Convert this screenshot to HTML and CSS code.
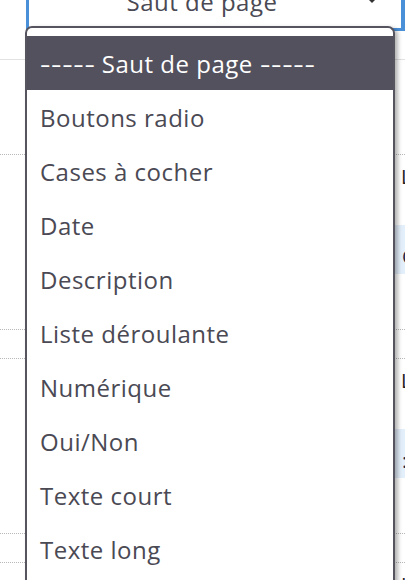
FILE: index.html
```html
<!DOCTYPE html>
<html lang="fr">
<head>
    <meta charset="UTF-8">
    <meta name="viewport" content="width=device-width, initial-scale=1.0">
    <title>Type de champ</title>
    <link rel="stylesheet" href="styles.css">
</head>
<body>
    <div class="page">
        <div class="field-type">
            <div class="select">
                <span class="select-value">Saut de page</span>
                <span class="caret"></span>
            </div>
        </div>

        <div class="field">
            <div class="field-label">Libellé</div>
            <div class="field-input">Question</div>
            <div class="field-sep"></div>
        </div>
        <div class="field">
            <div class="field-label">Libellé</div>
            <div class="field-input">: :</div>
            <div class="field-sep"></div>
        </div>
        <div class="field">
            <div class="field-label">Libellé</div>
        </div>
    </div>

    <ul class="dropdown">
        <li class="selected"><span class="dashes">-----</span> Saut de page <span class="dashes">-----</span></li>
        <li>Boutons radio</li>
        <li>Cases à cocher</li>
        <li>Date</li>
        <li>Description</li>
        <li>Liste déroulante</li>
        <li>Numérique</li>
        <li>Oui/Non</li>
        <li>Texte court</li>
        <li>Texte long</li>
    </ul>
</body>
</html>
```

FILE: styles.css
```css
html, body {
    overflow: hidden;
}

body {
    margin: 0;
    font-family: "Open Sans", "Noto Sans", sans-serif;
    color: #4a4954;
    background-color: #fff;
}

.page {
    width: 405px;
}

/* selected field type, scrolled mostly out of view */
.field-type {
    display: flow-root;
    height: 60px;
    border-bottom: 1px solid #e2e2e2;
    box-sizing: border-box;
    padding-left: 26px;
}

.select {
    position: relative;
    margin-top: -24px;
    height: 55px;
    border: 3px solid #4a90d9;
    border-right-width: 4px;
    box-sizing: border-box;
    background: #fff;
    display: flex;
    justify-content: center;
    align-items: flex-end;
    padding-right: 26px;
    padding-bottom: 14px;
}

.select-value {
    font-size: 24px;
    line-height: 24px;
    letter-spacing: 0.5px;
    color: #4a4954;
}

.caret {
    position: absolute;
    right: 24px;
    top: 19px;
    border-left: 5px solid transparent;
    border-right: 5px solid transparent;
    border-top: 5px solid #333;
}

.field {
    border-top: 1px dotted #b8b8b8;
    margin-top: 94px;
}

.field + .field {
    margin-top: 0;
}

.field-label {
    padding: 12px 0 0 401px;
    height: 20px;
    font-size: 20px;
    line-height: 20px;
    white-space: nowrap;
    color: #222;
}

.field-input {
    margin: 38px 0 0 395px;
    height: 49px;
    background-color: #e3effa;
    padding: 22px 0 0 7px;
    box-sizing: border-box;
    font-size: 20px;
    line-height: 20px;
    white-space: nowrap;
    color: #1d2a4a;
}

.field-sep {
    margin-top: 55px;
    height: 28px;
    border-top: 1px dotted #b8b8b8;
}

/* open dropdown of field types */
.dropdown {
    position: absolute;
    left: 25px;
    top: 26px;
    width: 370px;
    margin: 0;
    padding: 8px 0 0;
    list-style: none;
    background: #fff;
    border: 2px solid #55545f;
    border-bottom: none;
    border-radius: 7px 7px 0 0;
    box-sizing: border-box;
    box-shadow: 3px 2px 4px rgba(0, 0, 0, 0.3);
    height: 600px;
}

.dropdown li {
    height: 54px;
    line-height: 56px;
    padding-left: 13px;
    font-size: 24px;
    letter-spacing: 0.5px;
    color: #4a4954;
    white-space: nowrap;
}

.dropdown li.selected {
    background-color: #52515d;
    color: #fff;
}

/* wider dashes, like the system font */
.dropdown .dashes {
    display: inline-block;
    transform: scaleX(1.35);
    transform-origin: left center;
    margin-right: 14px;
}
```
